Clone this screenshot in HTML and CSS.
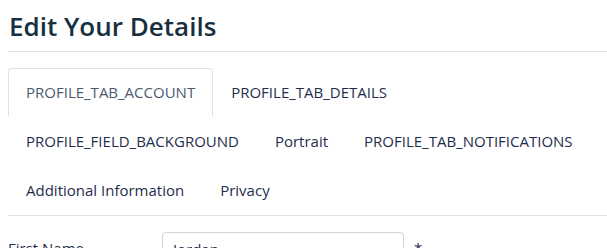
FILE: index.html
```html
<!DOCTYPE html>
<html>
<head>
<meta charset="utf-8">
<link rel="stylesheet" href="styles.css">
</head>
<body>
<div class="page">
  <h1 class="title">Edit Your Details</h1>
  <ul class="tabs">
    <li class="tab active">PROFILE_TAB_ACCOUNT</li>
    <li class="tab">PROFILE_TAB_DETAILS</li>
    <li class="tab">PROFILE_FIELD_BACKGROUND</li>
    <li class="tab">Portrait</li>
    <li class="tab">PROFILE_TAB_NOTIFICATIONS</li>
    <li class="tab">Additional Information</li>
    <li class="tab">Privacy</li>
  </ul>
  <div class="row">
    <label class="label">First Name</label>
    <div class="input">Jordan</div>
    <span class="req">*</span>
  </div>
</div>
</body>
</html>
```
FILE: styles.css
```css
html, body { margin: 0; padding: 0; background: #fff; }
body { font-family: "Open Sans", "Noto Sans", sans-serif; color: #1f2d4d; }
.page { padding: 0 0 0 8px; }
.title {
  margin: 0;
  padding: 10px 0 9px 1px;
  font-size: 26px;
  font-weight: 600;
  line-height: 32px;
  color: #17303f;
  border-bottom: 1px solid #dee2e6;
}
.tabs {
  list-style: none;
  margin: 16px 0 0 0;
  padding: 0;
  display: flex;
  flex-wrap: wrap;
  border-bottom: 1px solid #dee2e6;
  width: 599px;
}
.tab {
  font-size: 15px;
  line-height: 23px;
  padding: 12px 17px;
  border: 1px solid transparent;
  border-top-left-radius: 4px;
  border-top-right-radius: 4px;
  color: #1f2d4d;
}
.tab.active {
  border-color: #dee2e6 #dee2e6 #fff;
  color: #4b5b6e;
}
.row {
  display: flex;
  align-items: flex-start;
  margin-top: 16px;
}
.label { width: 154px; padding-top: 6px; font-size: 15px; color: #1f2d4d; }
.input {
  width: 220px;
  height: 36px;
  border: 1px solid #ced4da;
  border-radius: 4px;
  padding: 6px 10px;
  font-size: 15px;
  color: #1f2d4d;
}
.req { margin-left: 10px; padding-top: 6px; font-size: 15px; }
```
